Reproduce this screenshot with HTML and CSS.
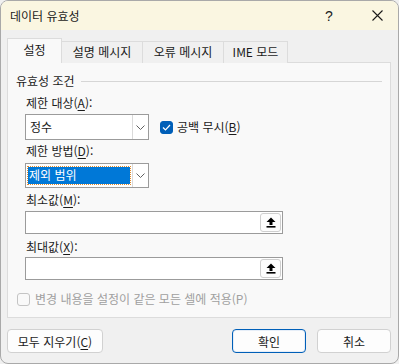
FILE: index.html
```html
<!DOCTYPE html>
<html lang="ko">
<head>
    <meta charset="UTF-8">
    <title>데이터 유효성</title>
    <link rel="stylesheet" href="styles.css">
</head>
<body>
    <div class="window">
        <div class="titlebar">
            <span class="title">데이터 유효성</span>
            <span class="help">?</span>
            <span class="close">
                <svg width="11" height="11" viewBox="0 0 11 11"><path d="M0.5 0.5 L10.5 10.5 M10.5 0.5 L0.5 10.5" stroke="#1a1a1a" stroke-width="1.1" fill="none"/></svg>
            </span>
        </div>
        <div class="content">
            <div class="tabs">
                <div class="tab active">설정</div>
                <div class="tab">설명 메시지</div>
                <div class="tab">오류 메시지</div>
                <div class="tab ime">IME 모드</div>
            </div>
            <div class="panel">
                <div class="group-title"><span>유효성 조건</span><div class="rule"></div></div>

                <div class="label first">제한 대상(<u>A</u>):</div>
                <div class="row">
                    <div class="select">
                        <div class="select-value">정수</div>
                        <div class="select-arrow">
                            <svg width="9" height="5" viewBox="0 0 9 5"><path d="M0.5 0.5 L4.5 4.5 L8.5 0.5" stroke="#606060" stroke-width="1" fill="none"/></svg>
                        </div>
                    </div>
                    <label class="check">
                        <span class="box checked">
                            <svg width="9" height="7" viewBox="0 0 9 7"><path d="M1 3.5 L3.5 6 L8 1" stroke="#fff" stroke-width="1.2" fill="none"/></svg>
                        </span>
                        공백 무시(<u>B</u>)
                    </label>
                </div>

                <div class="label">제한 방법(<u>D</u>):</div>
                <div class="select second">
                    <div class="select-value"><span class="highlight">제외 범위</span></div>
                    <div class="select-arrow">
                        <svg width="9" height="5" viewBox="0 0 9 5"><path d="M0.5 0.5 L4.5 4.5 L8.5 0.5" stroke="#606060" stroke-width="1" fill="none"/></svg>
                    </div>
                </div>

                <div class="label min">최소값(<u>M</u>):</div>
                <div class="ref-input">
                    <div class="ref-btn">
                        <svg width="10" height="11" viewBox="0 0 10 11"><path d="M5 0.5 L9.5 5 L6.5 5 L6.5 8 L3.5 8 L3.5 5 L0.5 5 Z" fill="#000"/><rect x="0.5" y="9" width="9" height="1.6" fill="#000"/></svg>
                    </div>
                </div>

                <div class="label max">최대값(<u>X</u>):</div>
                <div class="ref-input second">
                    <div class="ref-btn">
                        <svg width="10" height="11" viewBox="0 0 10 11"><path d="M5 0.5 L9.5 5 L6.5 5 L6.5 8 L3.5 8 L3.5 5 L0.5 5 Z" fill="#000"/><rect x="0.5" y="9" width="9" height="1.6" fill="#000"/></svg>
                    </div>
                </div>

                <label class="check disabled">
                    <span class="box"></span>
                    변경 내용을 설정이 같은 모든 셀에 적용(P)
                </label>
            </div>
            <div class="buttons">
                <button class="btn wide">모두 지우기(<u>C</u>)</button>
                <span class="spacer"></span>
                <button class="btn primary">확인</button>
                <button class="btn">취소</button>
            </div>
        </div>
    </div>
</body>
</html>
```

FILE: styles.css
```css
* {
    box-sizing: border-box;
    margin: 0;
    padding: 0;
}

body {
    font-family: "Noto Sans CJK KR", "Noto Sans", sans-serif;
    font-size: 12px;
    color: #1b1b1b;
    background: #f0f0f0;
}

u {
    text-decoration-thickness: 1px;
    text-underline-offset: 2px;
}

.window {
    width: 399px;
    height: 364px;
    background: #f0f0f0;
    border: 1px solid #a9a9a9;
    border-radius: 8px;
    overflow: hidden;
}

.titlebar {
    height: 29px;
    background: #faf6e1;
    display: flex;
    align-items: center;
    padding-left: 9px;
}

.title {
    flex: 1;
    line-height: 16px;
}

.help {
    font-family: "Liberation Sans", sans-serif;
    font-size: 14px;
    width: 12px;
    margin-right: 35px;
}

.close {
    display: flex;
    margin-right: 15px;
}

.content {
    padding: 0 7px 0 6px;
}

.tabs {
    display: flex;
    align-items: flex-end;
    height: 33px;
    margin-bottom: -1px;
    position: relative;
    z-index: 1;
}

.tab {
    width: 81px;
    height: 22px;
    line-height: 20px;
    text-align: center;
    white-space: nowrap;
    border: 1px solid #dcdcdc;
    border-bottom: none;
    border-left: none;
    background: #f0f0f0;
}

.tab.ime {
    width: 64px;
}

.tab.active {
    width: 55px;
    height: 25px;
    line-height: 22px;
    background: #f9f9f9;
    border-left: 1px solid #dcdcdc;
}

.panel {
    height: 256px;
    background: #f9f9f9;
    border: 1px solid #dcdcdc;
    padding: 10px 8px 0 8px;
}

.group-title {
    display: flex;
    align-items: center;
    line-height: 16px;
}

.group-title .rule {
    flex: 1;
    height: 1px;
    background: #d6d6d6;
    margin-left: 6px;
}

.label {
    line-height: 16px;
    margin-left: 10px;
    margin-top: 3px;
}

.label.first {
    margin-top: 6px;
}

.label.min {
    margin-top: 4px;
}

.label.max {
    margin-top: 5px;
}

.row {
    display: flex;
    align-items: center;
    margin-top: 3px;
}

.select {
    display: flex;
    width: 124px;
    height: 26px;
    margin-left: 9px;
    border: 1px solid #9b9b9b;
    background: #fff;
}

.select.second {
    height: 25px;
    margin-top: 4px;
}

.select-value {
    flex: 1;
    padding: 3px 2px;
    line-height: 18px;
}

.row .select-value {
    padding-left: 4px;
}

.highlight {
    display: block;
    background: #0078d7;
    color: #fff;
    height: 17px;
    line-height: 16px;
    padding-left: 1px;
    outline: 1px dotted #e08a2c;
}

.select-arrow {
    width: 16px;
    border-left: 1px solid #dadada;
    display: flex;
    align-items: center;
    justify-content: center;
}

.check {
    display: flex;
    align-items: center;
    line-height: 16px;
    margin-left: 11px;
}

.box {
    width: 13px;
    height: 13px;
    border-radius: 3px;
    border: 1px solid #8a8a8a;
    margin-right: 4px;
    display: flex;
    align-items: center;
    justify-content: center;
}

.box.checked {
    background: #005fb8;
    border-color: #005fb8;
}

.check.disabled {
    color: #a0a0a0;
    margin-left: 1px;
    margin-top: 11px;
}

.check.disabled .box {
    border-color: #c4c4c4;
    margin-right: 5px;
}

.ref-input {
    width: 258px;
    height: 23px;
    margin-left: 9px;
    margin-top: 3px;
    background: #fff;
    border: 1px solid #9b9b9b;
    display: flex;
    justify-content: flex-end;
    align-items: center;
    padding-right: 1px;
}

.ref-input.second {
    margin-top: 2px;
}

.ref-btn {
    width: 21px;
    height: 19px;
    border: 1px solid #cfcfcf;
    border-radius: 3px;
    background: #fdfdfd;
    display: flex;
    align-items: center;
    justify-content: center;
}

.buttons {
    display: flex;
    margin-top: 11px;
    gap: 11px;
}

.spacer {
    flex: 1;
}

.btn {
    font-family: inherit;
    font-size: 12px;
    color: #1b1b1b;
    height: 24px;
    width: 74px;
    background: #fdfdfd;
    border: 1px solid #d1d1d1;
    border-radius: 4px;
}

.btn.wide {
    width: 96px;
}

.btn.primary {
    border-color: #005fb8;
    box-shadow: inset 0 0 0 1px #e6eef8;
}
```
